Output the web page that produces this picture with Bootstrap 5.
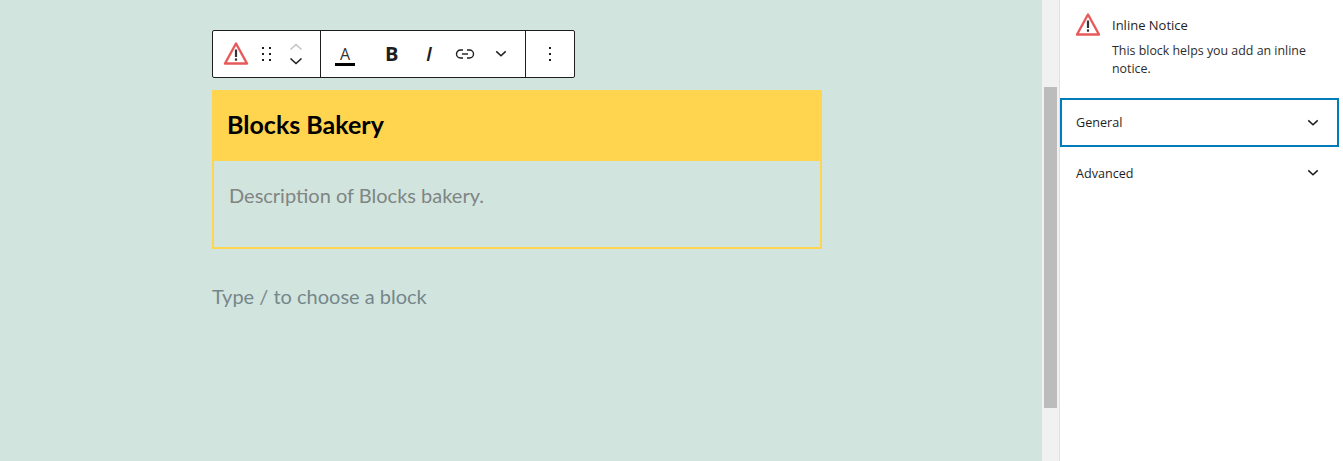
<!DOCTYPE html>
<html lang="en">
<head>
  <meta charset="UTF-8" />
  <meta name="viewport" content="width=device-width, initial-scale=1" />
  <title>Inline Notice</title>
  <link href="https://cdn.jsdelivr.net/npm/bootstrap@5.3.0/dist/css/bootstrap.min.css" rel="stylesheet" />
  <style>
    html, body { height: 461px; overflow: hidden; }
    body { font-family: "Open Sans", "Noto Sans", sans-serif; color: #1e1e1e; background: #fff; }
    .editor-pane { width: 1042px; height: 461px; background: #d2e4de; padding: 30px 0 0 212px; flex: none; }
    .block-bar { width: 363px; height: 48px; background: #fff; border: 1px solid #1e1e1e; border-radius: 2px; }
    .bar-group { height: 46px; border-right: 1px solid #1e1e1e; position: relative; }
    .bar-group:last-child { border-right: 0; }
    .group-a { width: 108px; }
    .group-b { width: 205px; }
    .group-c { width: 48px; }
    .bar-icon { position: absolute; display: block; }
    .fmt-a { left: 14px; top: 13px; width: 20px; text-align: center; font-size: 16px; line-height: 20px; color: #333; }
    .fmt-line { left: 14px; top: 32px; width: 20px; height: 3px; background: #000; }
    .fmt-b { left: 64px; top: 11px; font-size: 20px; line-height: 24px; font-weight: 700; }
    .fmt-i { left: 105px; top: 11px; font-size: 20px; line-height: 24px; font-weight: 600; font-style: italic; }
    .notice-box { width: 610px; margin-top: 12px; }
    .notice-head { height: 71px; background: #ffd44f; padding: 0 15px; font-family: "Lato", sans-serif; font-size: 25px; font-weight: 700; color: #000; line-height: 69px; }
    .notice-body { height: 88px; border: 2px solid #ffd44f; border-top: 0; padding: 21px 15px 0; font-family: "Lato", sans-serif; font-size: 20px; line-height: 26px; color: #7f8583; }
    .block-hint { margin-top: 34px; font-family: "Lato", sans-serif; font-size: 20px; line-height: 26px; color: #75878a; }
    .scroll-track { width: 17px; height: 461px; background: #f1f1f1; padding: 87px 2px 0; flex: none; }
    .scroll-thumb { height: 321px; background: #bcbcbc; }
    .side-pane { width: 284px; height: 461px; border-left: 1px solid #e0e0e0; padding-right: 4px; flex: none; background: #fff; }
    .side-card { height: 98px; padding: 12px 16px 0 15px; gap: 11px; }
    .side-title { font-size: 13px; line-height: 18px; font-weight: 500; margin: 0 0 8px; padding-top: 4px; }
    .side-text { font-size: 12.4px; line-height: 18px; margin: 0; color: #2c2c2c; width: 210px; }
    .panel-row { height: 52px; padding: 0 20px 0 16px; font-size: 12.6px; font-weight: 500; background: #fff; }
    .panel-row span { padding-top: 2px; }
    .panel-row.is-focus { height: 49px; padding: 0 18px 0 14px; border: 2px solid #007cba; }
  </style>
</head>
<body>
  <div class="d-flex">
    <div class="editor-pane">
      <div class="block-bar d-flex">
        <div class="bar-group group-a">
          <svg class="bar-icon" style="left:10px;top:10px" width="26" height="25" viewBox="0 0 26 25" fill="none">
            <path d="M13 2.5 L24 22.5 H2 Z" stroke="#e85a5a" stroke-width="2.4" stroke-linejoin="round"/>
            <rect x="11.9" y="8.5" width="2.2" height="7.5" fill="#333"/>
            <rect x="11.9" y="17.4" width="2.2" height="2.3" fill="#333"/>
          </svg>
          <svg class="bar-icon" style="left:48px;top:16px" width="12" height="16" viewBox="0 0 12 16" fill="#1e1e1e">
            <rect x="1" y="0" width="2" height="2"/><rect x="8" y="0" width="2" height="2"/>
            <rect x="1" y="6" width="2" height="2"/><rect x="8" y="6" width="2" height="2"/>
            <rect x="1" y="12" width="2" height="2"/><rect x="8" y="12" width="2" height="2"/>
          </svg>
          <svg class="bar-icon" style="left:76px;top:11px" width="14" height="9" viewBox="0 0 14 9" fill="none"><path d="M1.5 7.5 L7 2.5 L12.5 7.5" stroke="#c4c4c4" stroke-width="1.6"/></svg>
          <svg class="bar-icon" style="left:76px;top:26px" width="14" height="9" viewBox="0 0 14 9" fill="none"><path d="M1.5 1.5 L7 6.5 L12.5 1.5" stroke="#1e1e1e" stroke-width="1.6"/></svg>
        </div>
        <div class="bar-group group-b">
          <span class="bar-icon fmt-a">A</span>
          <span class="bar-icon fmt-line"></span>
          <span class="bar-icon fmt-b">B</span>
          <span class="bar-icon fmt-i">I</span>
          <svg class="bar-icon" style="left:134px;top:16px" width="20" height="14" viewBox="0 0 20 14" fill="none" stroke="#1e1e1e" stroke-width="1.4">
            <path d="M8 3 H5.5 a4 4 0 0 0 0 8 H8"/><path d="M12 3 H14.5 a4 4 0 0 1 0 8 H12"/><path d="M7 7 H13"/>
          </svg>
          <svg class="bar-icon" style="left:174px;top:19px" width="12" height="8" viewBox="0 0 14 9" fill="none"><path d="M1.5 1.5 L7 6.5 L12.5 1.5" stroke="#1e1e1e" stroke-width="1.8"/></svg>
        </div>
        <div class="bar-group group-c">
          <svg class="bar-icon" style="left:23px;top:16px" width="3" height="15" viewBox="0 0 3 15" fill="#1e1e1e">
            <rect x="0" y="0" width="2" height="2"/><rect x="0" y="6" width="2" height="2"/><rect x="0" y="12" width="2" height="2"/>
          </svg>
        </div>
      </div>
      <div class="notice-box">
        <div class="notice-head">Blocks Bakery</div>
        <div class="notice-body">Description of Blocks bakery.</div>
      </div>
      <div class="block-hint">Type / to choose a block</div>
    </div>
    <div class="scroll-track"><div class="scroll-thumb"></div></div>
    <div class="side-pane">
      <div class="side-card d-flex">
        <svg class="flex-shrink-0" width="26" height="25" viewBox="0 0 26 25" fill="none">
          <path d="M13 2.5 L24 22.5 H2 Z" stroke="#e85a5a" stroke-width="2.4" stroke-linejoin="round"/>
          <rect x="11.9" y="8.5" width="2.2" height="7.5" fill="#333"/>
          <rect x="11.9" y="17.4" width="2.2" height="2.3" fill="#333"/>
        </svg>
        <div>
          <p class="side-title">Inline Notice</p>
          <p class="side-text">This block helps you add an inline notice.</p>
        </div>
      </div>
      <div class="panel-row is-focus d-flex align-items-center justify-content-between">
        <span>General</span>
        <svg width="12" height="8" viewBox="0 0 14 9" fill="none"><path d="M1.5 1.5 L7 6.5 L12.5 1.5" stroke="#1e1e1e" stroke-width="1.8"/></svg>
      </div>
      <div class="panel-row d-flex align-items-center justify-content-between">
        <span>Advanced</span>
        <svg width="12" height="8" viewBox="0 0 14 9" fill="none"><path d="M1.5 1.5 L7 6.5 L12.5 1.5" stroke="#1e1e1e" stroke-width="1.8"/></svg>
      </div>
    </div>
  </div>
  <script src="https://cdn.jsdelivr.net/npm/bootstrap@5.3.0/dist/js/bootstrap.bundle.min.js"></script>
</body>
</html>
